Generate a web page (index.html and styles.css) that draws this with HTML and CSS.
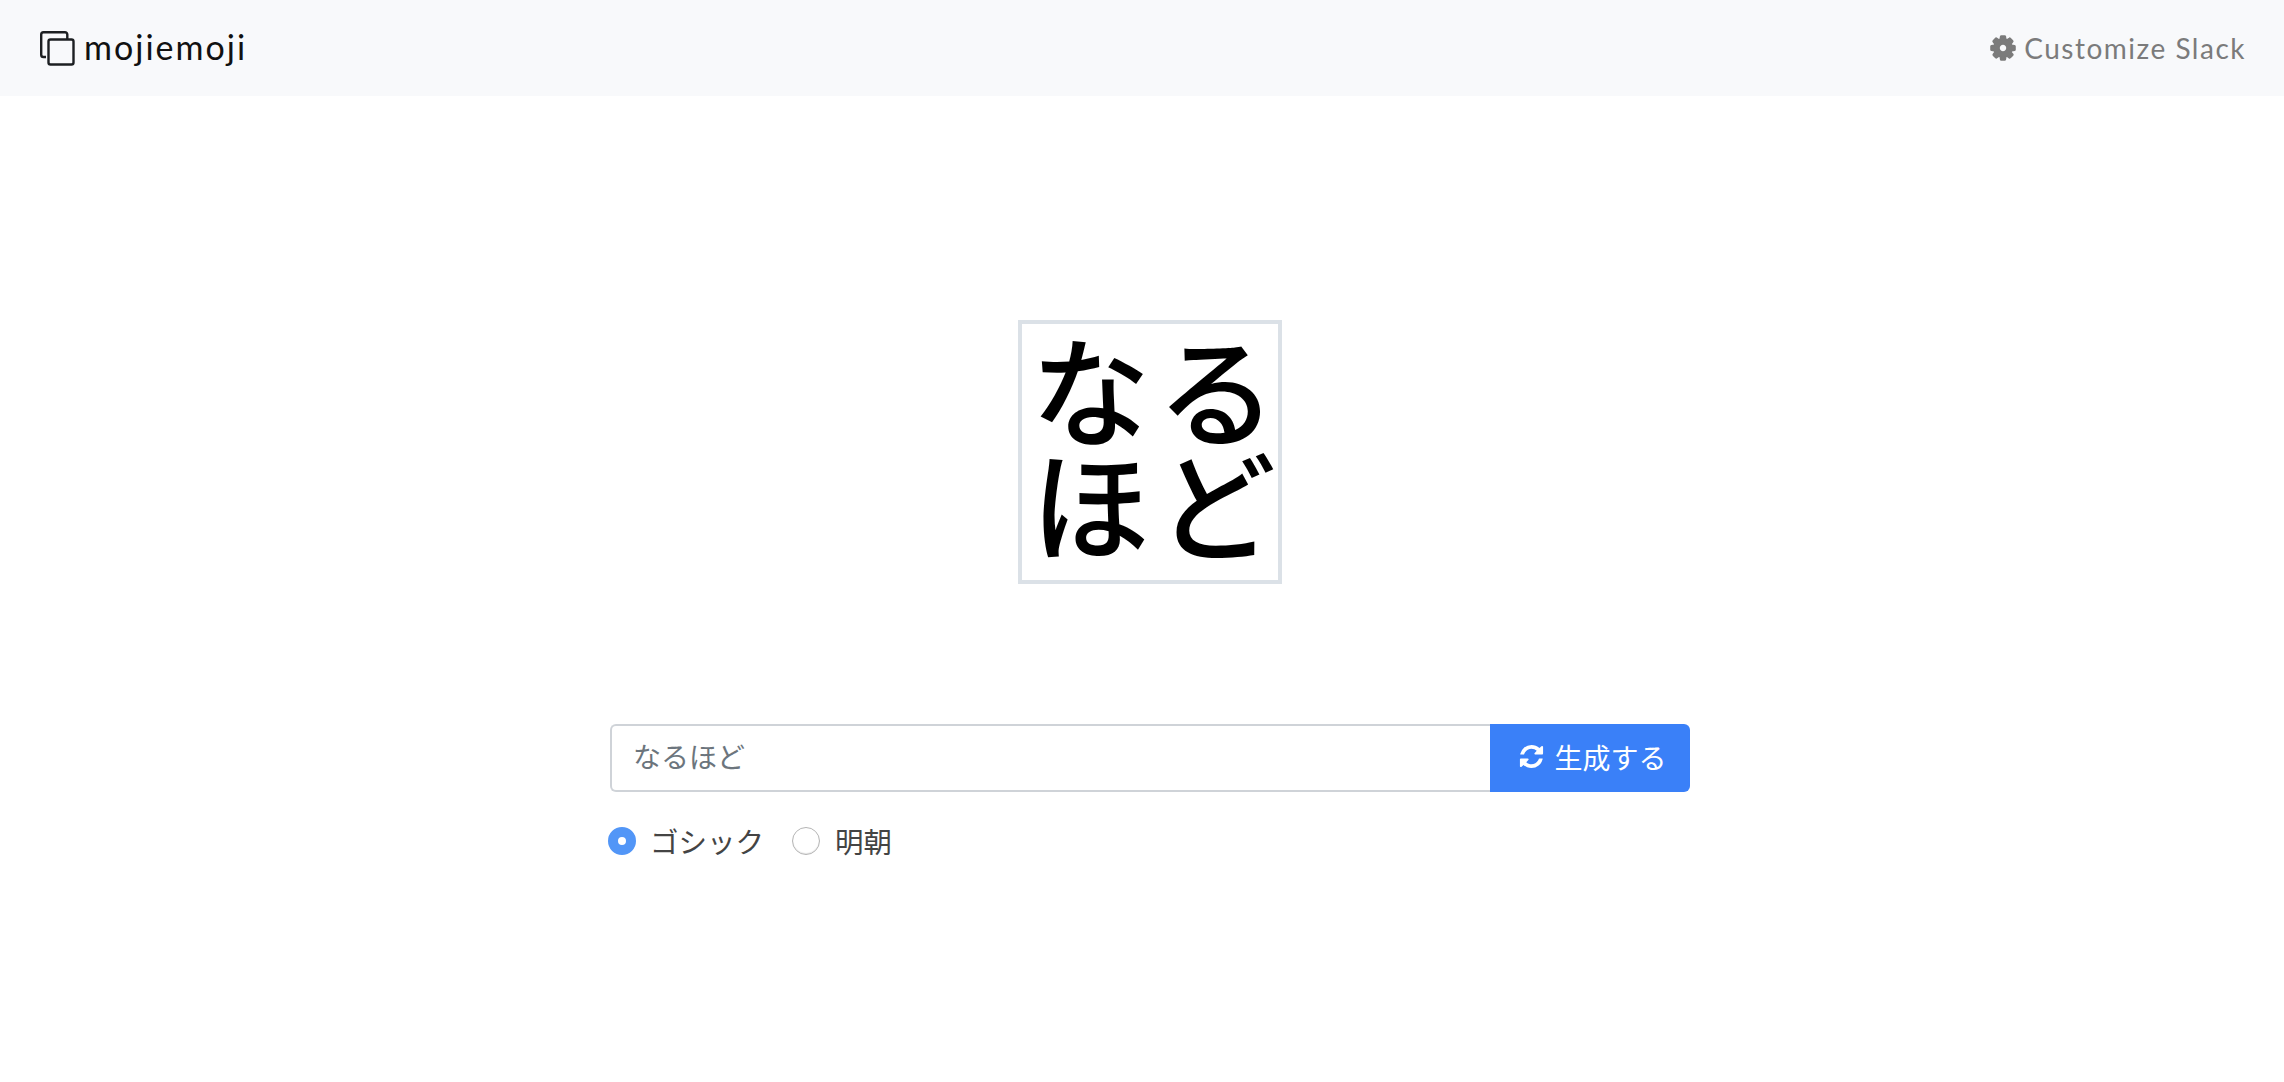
FILE: index.html
```html
<!DOCTYPE html>
<html lang="ja">
<head>
<meta charset="utf-8">
<title>mojiemoji</title>
<link rel="stylesheet" href="styles.css">
</head>
<body>
<nav class="navbar">
  <a class="brand">
    <svg class="brand-icon" viewBox="0 0 35 35" fill="none" stroke="#1c1f22" stroke-width="2.4" stroke-linejoin="round"><path d="M6 26H3.500a2.300 2.300 0 0 1-2.300-2.300V3.500A2.300 2.300 0 0 1 3.500 1.200H25a2.300 2.300 0 0 1 2.300 2.300V8"/><rect x="8.500" y="8.500" width="25" height="25" rx="2"/></svg>
    <span class="brand-name">mojiemoji</span>
  </a>
  <a class="nav-link">
    <svg class="gear" viewBox="0 0 1792 1792" fill="#7b7b7b" stroke="#7b7b7b" stroke-width="100"><path d="M1152 896q0-106-75-181t-181-75-181 75-75 181 75 181 181 75 181-75 75-181zm512-109v222q0 12-8 23t-20 13l-185 28q-19 54-39 91 35 50 107 138 10 12 10 25t-9 23q-27 37-99 108t-94 71q-12 0-26-9l-138-108q-44 23-91 38-16 136-29 186-7 28-36 28h-222q-14 0-24.500-8.500t-11.500-21.500l-28-184q-49-16-90-37l-141 107q-10 9-25 9-14 0-25-11-126-114-165-168-7-10-7-23 0-12 8-23 15-21 51-66.500t54-70.500q-27-50-41-99l-183-27q-13-2-21-12.500t-8-23.500v-222q0-12 8-23t19-13l186-28q14-46 39-92-40-57-107-138-10-12-10-24 0-10 9-23 26-36 98.500-107.500t94.500-71.500q13 0 26 10l138 107q44-23 91-38 16-136 29-186 7-28 36-28h222q14 0 24.500 8.500t11.500 21.500l28 184q49 16 90 37l142-107q9-9 24-9 13 0 25 10 129 119 165 170 7 8 7 22 0 12-8 23-15 21-51 66.500t-54 70.500q26 50 41 98l183 28q13 2 21 12.500t8 23.500z"/></svg>
    <span>Customize Slack</span>
  </a>
</nav>
<main class="main">
  <div class="preview">
    <span>なる</span>
    <span>ほど</span>
  </div>
  <form class="form">
    <div class="field">
      <input class="input" type="text" placeholder="なるほど">
      <button class="button" type="button">
        <svg class="refresh" viewBox="0 0 1792 1792" fill="#fff"><path d="M1639 1056q0 5-1 7-64 268-268 434.500t-478 166.500q-146 0-282.500-55t-243.500-157l-129 129q-19 19-45 19t-45-19-19-45v-448q0-26 19-45t45-19h448q26 0 45 19t19 45-19 45l-137 137q71 66 161 102t187 36q134 0 250-65t186-179q11-17 53-117 8-23 30-23h192q13 0 22.500 9.500t9.500 22.500zm25-800v448q0 26-19 45t-45 19h-448q-26 0-45-19t-19-45 19-45l138-138q-148-137-349-137-134 0-250 65t-186 179q-11 17-53 117-8 23-30 23h-199q-13 0-22.500-9.500t-9.500-22.500v-7q65-268 270-434.500t480-166.500q146 0 284 55.500t245 156.500l130-129q19-19 45-19t45 19 19 45z"/></svg>
        <span>生成する</span>
      </button>
    </div>
    <div class="radios">
      <label class="radio"><span class="dot dot-on"></span><span>ゴシック</span></label>
      <label class="radio"><span class="dot"></span><span class="radio-text">明朝</span></label>
    </div>
  </form>
</main>
</body>
</html>
```
FILE: styles.css
```css
* { box-sizing: border-box; }
html, body { margin: 0; height: 100%; background: #fff; }
body { font-family: Lato, "Noto Sans CJK JP", sans-serif; color: #363636; overflow: hidden; }

.navbar {
  height: 96px;
  background: #f8f9fb;
  display: flex;
  align-items: center;
  justify-content: space-between;
  padding: 0 38px 0 40px;
}
.brand { display: flex; align-items: center; gap: 9px; color: #111; }
.brand-icon { width: 35px; height: 35px; }
.brand-name { font-size: 34px; letter-spacing: 2px; line-height: 1; margin-top: -2px; }
.nav-link { display: flex; align-items: center; gap: 7px; color: #7b7b7b; font-size: 28px; letter-spacing: 1.5px; }
.gear { width: 28px; height: 28px; }

.main { display: flex; flex-direction: column; align-items: center; padding: 224px 0 0 16px; }

.preview {
  width: 264px;
  height: 264px;
  padding: 0 0 18px 14px;
  border: 4px solid #dbe1e7;
  background: #fff;
  display: flex;
  flex-direction: column;
  align-items: center;
  justify-content: center;
  color: #000;
  font-family: "Noto Sans CJK JP", sans-serif;
  font-weight: 500;
  font-size: 119px;
  letter-spacing: 7px;
  line-height: 114px;
}
.preview span { display: block; white-space: nowrap; }

.form { width: 1080px; margin-top: 140px; }
.field { display: flex; }
.input {
  flex: 1;
  min-width: 0;
  height: 68px;
  border: 2px solid #cfd3d8;
  border-right: 0;
  border-radius: 6px 0 0 6px;
  padding: 0 22px 4px 21px;
  font-family: "Noto Sans CJK JP", sans-serif;
  font-size: 28px;
  outline: none;
}
.input::placeholder { color: #6c757d; opacity: 1; }
.button {
  width: 200px;
  height: 68px;
  border: 0;
  border-radius: 0 6px 6px 0;
  background: #3a80f8;
  color: #fff;
  display: flex;
  align-items: center;
  justify-content: center;
  gap: 9px;
  font-family: "Noto Sans CJK JP", sans-serif;
  font-size: 28px;
  padding: 0 0 3px 5px;
}
.refresh { width: 27px; height: 27px; }

.radios { display: flex; gap: 28px; margin-top: 28px; margin-left: -2px; }
.radio { display: flex; align-items: center; gap: 14px; font-family: "Noto Sans CJK JP", sans-serif; font-size: 28.500px; color: #444; }
.radio-text { margin-left: 1px; }
.dot { width: 28px; height: 28px; border-radius: 50%; border: 1.500px solid #b5b5b5; background: #fff; box-shadow: inset 0 -1px 1px rgba(0,0,0,.1); }
.dot-on { border: 10px solid #5296f7; box-shadow: none; }
```
